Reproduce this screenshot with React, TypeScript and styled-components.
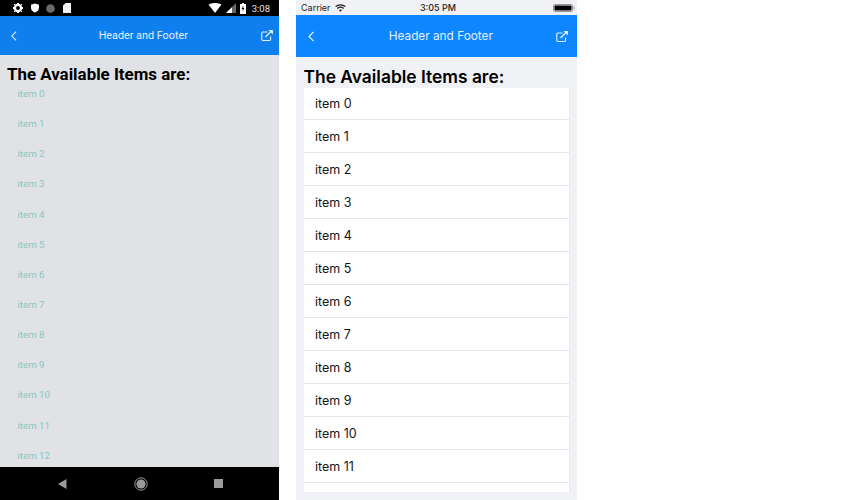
import React from "react";
import styled, { createGlobalStyle } from "styled-components";

const Global = createGlobalStyle`
  html, body { margin: 0; padding: 0; background: #fff; }
  #root { width: 860px; height: 500px; overflow: hidden; }
`;

const Page = styled.div`
  display: flex;
  gap: 17px;
  width: 860px;
  height: 500px;
  background: #fff;
`;

const AndroidPhone = styled.div`
  width: 279px;
  height: 500px;
  display: flex;
  flex-direction: column;
  background: #e1e2e6;
  font-family: Roboto, "Liberation Sans", sans-serif;
`;

const AndroidStatus = styled.div`
  height: 16px;
  flex: none;
  background: #000;
  display: flex;
  align-items: center;
  justify-content: space-between;
  padding: 0 9px 0 13px;
  color: #e6e6e6;
  font-size: 9.5px;
`;

const IconRow = styled.div<{ $gap: number }>`
  display: flex;
  align-items: center;
  gap: ${(p) => p.$gap}px;
`;

const StatusTime = styled.span`
  margin-left: 2px;
`;

const Header = styled.div<{ $h: number; $bg: string; $size: number; $left: number; $right: number }>`
  height: ${(p) => p.$h}px;
  flex: none;
  box-sizing: border-box;
  background: ${(p) => p.$bg};
  color: #e3f0ff;
  display: flex;
  align-items: center;
  justify-content: space-between;
  padding: 0 ${(p) => p.$right}px 0 ${(p) => p.$left}px;
  font-size: ${(p) => p.$size}px;
`;

const HeaderTitle = styled.span<{ $shift: number }>`
  padding-left: ${(p) => p.$shift}px;
`;

const AndroidTitle = styled.div`
  margin: 9px 0 0 7px;
  font-size: 16.9px;
  line-height: 20px;
  font-weight: 700;
  color: #000;
`;

const AndroidList = styled.div`
  flex: 1;
  min-height: 0;
  overflow: hidden;
  padding-top: 4px;
`;

const AndroidItem = styled.div`
  height: 30.15px;
  padding-left: 17.5px;
  font-size: 9.7px;
  line-height: 12px;
  color: #84c9bc;
`;

const AndroidNav = styled.div`
  height: 33px;
  flex: none;
  background: #000;
  display: grid;
  grid-template-columns: repeat(3, 78px);
  justify-items: center;
  align-items: center;
  padding-left: 23.5px;
`;

const IosPhone = styled.div`
  width: 281px;
  height: 500px;
  display: flex;
  flex-direction: column;
  background: #f0f1f5;
  font-family: Inter, "Liberation Sans", sans-serif;
`;

const IosStatus = styled.div`
  height: 15px;
  flex: none;
  display: grid;
  grid-template-columns: 1fr auto 1fr;
  align-items: center;
  padding: 0 2px 0 5px;
  font-size: 9px;
  color: #222;
`;

const Carrier = styled.div`
  display: flex;
  align-items: center;
  gap: 4px;
`;

const Clock = styled.div`
  font-weight: 500;
`;

const BatteryWrap = styled.div`
  display: flex;
  justify-content: flex-end;
`;

const IosBody = styled.div`
  flex: 1;
  min-height: 0;
  display: flex;
  flex-direction: column;
  padding: 8px 7px 8px 7.5px;
`;

const IosTitle = styled.div`
  font-size: 17.4px;
  line-height: 23px;
  font-weight: 600;
  color: #000;
  white-space: nowrap;
`;

const IosList = styled.div`
  flex: 1;
  min-height: 0;
  overflow: hidden;
  background: #fff;
  margin-left: 0.5px;
  border-right: 1px solid #e9e9ed;
`;

const IosItem = styled.div`
  height: 33px;
  box-sizing: border-box;
  border-bottom: 1px solid #e6e6ea;
  padding: 1px 11px 0;
  display: flex;
  align-items: center;
  font-size: 12.5px;
  color: #141414;

  &:first-child {
    height: 32px;
    padding-top: 0;
  }
`;

const Back = ({ h = 10 }: { h?: number }) => (
  <svg width={h * 0.6} height={h} viewBox="0 0 8 13" fill="none" stroke="#eaf4ff" strokeWidth="1.4">
    <path d="M6.8 .8 1.2 6.5l5.6 5.7" />
  </svg>
);

const External = () => (
  <svg width="12" height="11" viewBox="0 0 13 12" fill="none" stroke="#e3f0ff" strokeWidth="1.2">
    <path d="M7 2.2H2A1.2 1.2 0 0 0 .8 3.4v6.8A1.2 1.2 0 0 0 2 11.4h7.2a1.2 1.2 0 0 0 1.2-1.2V7" />
    <path d="M4.8 7.6 10.6 1.8" strokeWidth="1.5" />
    <path d="M8 0h5v5Z" fill="#e3f0ff" stroke="none" />
  </svg>
);

const Gear = () => (
  <svg width="10" height="10" viewBox="0 0 12 12">
    <circle cx="6" cy="6" r="3.7" fill="none" stroke="#fff" strokeWidth="2.8" />
    <path d="M4.7 0h2.6v2.4H4.7zM4.7 9.6h2.6V12H4.7zM0 4.7h2.4v2.6H0zM9.6 4.7H12v2.6H9.6z" fill="#fff" />
    <path d="M1.9 .9 4 3 3 4 .9 1.9zM10.1 .9 11.1 1.9 9 4 8 3zM.9 10.1 3 8 4 9 1.9 11.1zM9 8 11.1 10.1 10.1 11.1 8 9z" fill="#fff" />
  </svg>
);

const Shield = () => (
  <svg width="8" height="10" viewBox="0 0 9 10">
    <path d="M4.5 0 9 1.4v3.2C9 7.2 7 9.2 4.5 10 2 9.2 0 7.2 0 4.6V1.4Z" fill="#fff" />
  </svg>
);

const Dot = () => (
  <svg width="9" height="9" viewBox="0 0 10 10">
    <circle cx="5" cy="5" r="4.8" fill="#6a6a6a" />
  </svg>
);

const Sd = () => (
  <svg width="8" height="10" viewBox="0 0 8 10">
    <path d="M2.6 0H8v10H0V2.6Z" fill="#f4f4f4" />
  </svg>
);

const AndroidWifi = () => (
  <svg width="14" height="10" viewBox="0 0 13 10">
    <path d="M0 1.4C3.8-.5 9.2-.5 13 1.4L6.5 10Z" fill="#fff" />
  </svg>
);

const Signal = () => (
  <svg width="10" height="10" viewBox="0 0 10 10">
    <path d="M10 0v10H0Z" fill="#666" />
    <path d="M6 4.2V10H0Z" fill="#fff" />
  </svg>
);

const AndroidBattery = () => (
  <svg width="6" height="11" viewBox="0 0 6 11">
    <path d="M2 0h2v1h2v10H0V1h2Z" fill="#fff" />
    <path d="M3.4 2.4 1.6 6h1.2l-.3 2.8L4.4 5H3.2Z" fill="#000" />
  </svg>
);

const NavBack = () => (
  <svg width="9" height="10" viewBox="0 0 9 10">
    <path d="M8.5 0v10L0 5Z" fill="#9a9a9a" />
  </svg>
);

const NavHome = () => (
  <svg width="14" height="14" viewBox="0 0 14 14">
    <circle cx="7" cy="7" r="6.2" fill="none" stroke="#9a9a9a" strokeWidth="1" />
    <circle cx="7" cy="7" r="4.6" fill="#9a9a9a" />
  </svg>
);

const NavSquare = () => (
  <svg width="9" height="9" viewBox="0 0 9 9">
    <rect width="9" height="9" fill="#9a9a9a" />
  </svg>
);

const IosWifi = () => (
  <svg width="11" height="8" viewBox="0 0 11 8" fill="none" stroke="#222" strokeWidth="1.3">
    <path d="M.6 2.6c2.8-2.4 7-2.4 9.8 0" />
    <path d="M2.3 4.4c1.9-1.5 4.5-1.5 6.4 0" />
    <path d="M5.5 7.8 3.9 6c1-.7 2.2-.7 3.2 0Z" fill="#222" stroke="none" />
  </svg>
);

const IosBattery = () => (
  <svg width="22" height="8" viewBox="0 0 22 8">
    <rect x=".5" y=".5" width="19" height="7" rx="1.5" fill="none" stroke="#999" />
    <rect x="1.5" y="1.5" width="17" height="5" rx=".8" fill="#000" />
    <rect x="20.4" y="2.6" width="1" height="2.8" fill="#999" />
  </svg>
);

const androidItems = Array.from({ length: 13 }, (_, i) => `item ${i}`);
const iosItems = Array.from({ length: 12 }, (_, i) => `item ${i}`);

export default function App() {
  return (
    <Page>
      <Global />
      <AndroidPhone>
        <AndroidStatus>
          <IconRow $gap={7.5}>
            <Gear />
            <Shield />
            <Dot />
            <Sd />
          </IconRow>
          <IconRow $gap={4}>
            <AndroidWifi />
            <Signal />
            <AndroidBattery />
            <StatusTime>3:08</StatusTime>
          </IconRow>
        </AndroidStatus>
        <Header $h={39} $bg="#0f7fee" $size={10.8} $left={11} $right={6}>
          <Back />
          <HeaderTitle $shift={8.5}>Header and Footer</HeaderTitle>
          <External />
        </Header>
        <AndroidTitle>The Available Items are:</AndroidTitle>
        <AndroidList>
          {androidItems.map((t) => (
            <AndroidItem key={t}>{t}</AndroidItem>
          ))}
        </AndroidList>
        <AndroidNav>
          <NavBack />
          <NavHome />
          <NavSquare />
        </AndroidNav>
      </AndroidPhone>
      <IosPhone>
        <IosStatus>
          <Carrier>
            Carrier
            <IosWifi />
          </Carrier>
          <Clock>3:05 PM</Clock>
          <BatteryWrap>
            <IosBattery />
          </BatteryWrap>
        </IosStatus>
        <Header $h={42} $bg="#0d86ff" $size={11.8} $left={12} $right={9}>
          <Back h={11} />
          <HeaderTitle $shift={11}>Header and Footer</HeaderTitle>
          <External />
        </Header>
        <IosBody>
          <IosTitle>The Available Items are:</IosTitle>
          <IosList>
            {iosItems.map((t) => (
              <IosItem key={t}>{t}</IosItem>
            ))}
          </IosList>
        </IosBody>
      </IosPhone>
    </Page>
  );
}
